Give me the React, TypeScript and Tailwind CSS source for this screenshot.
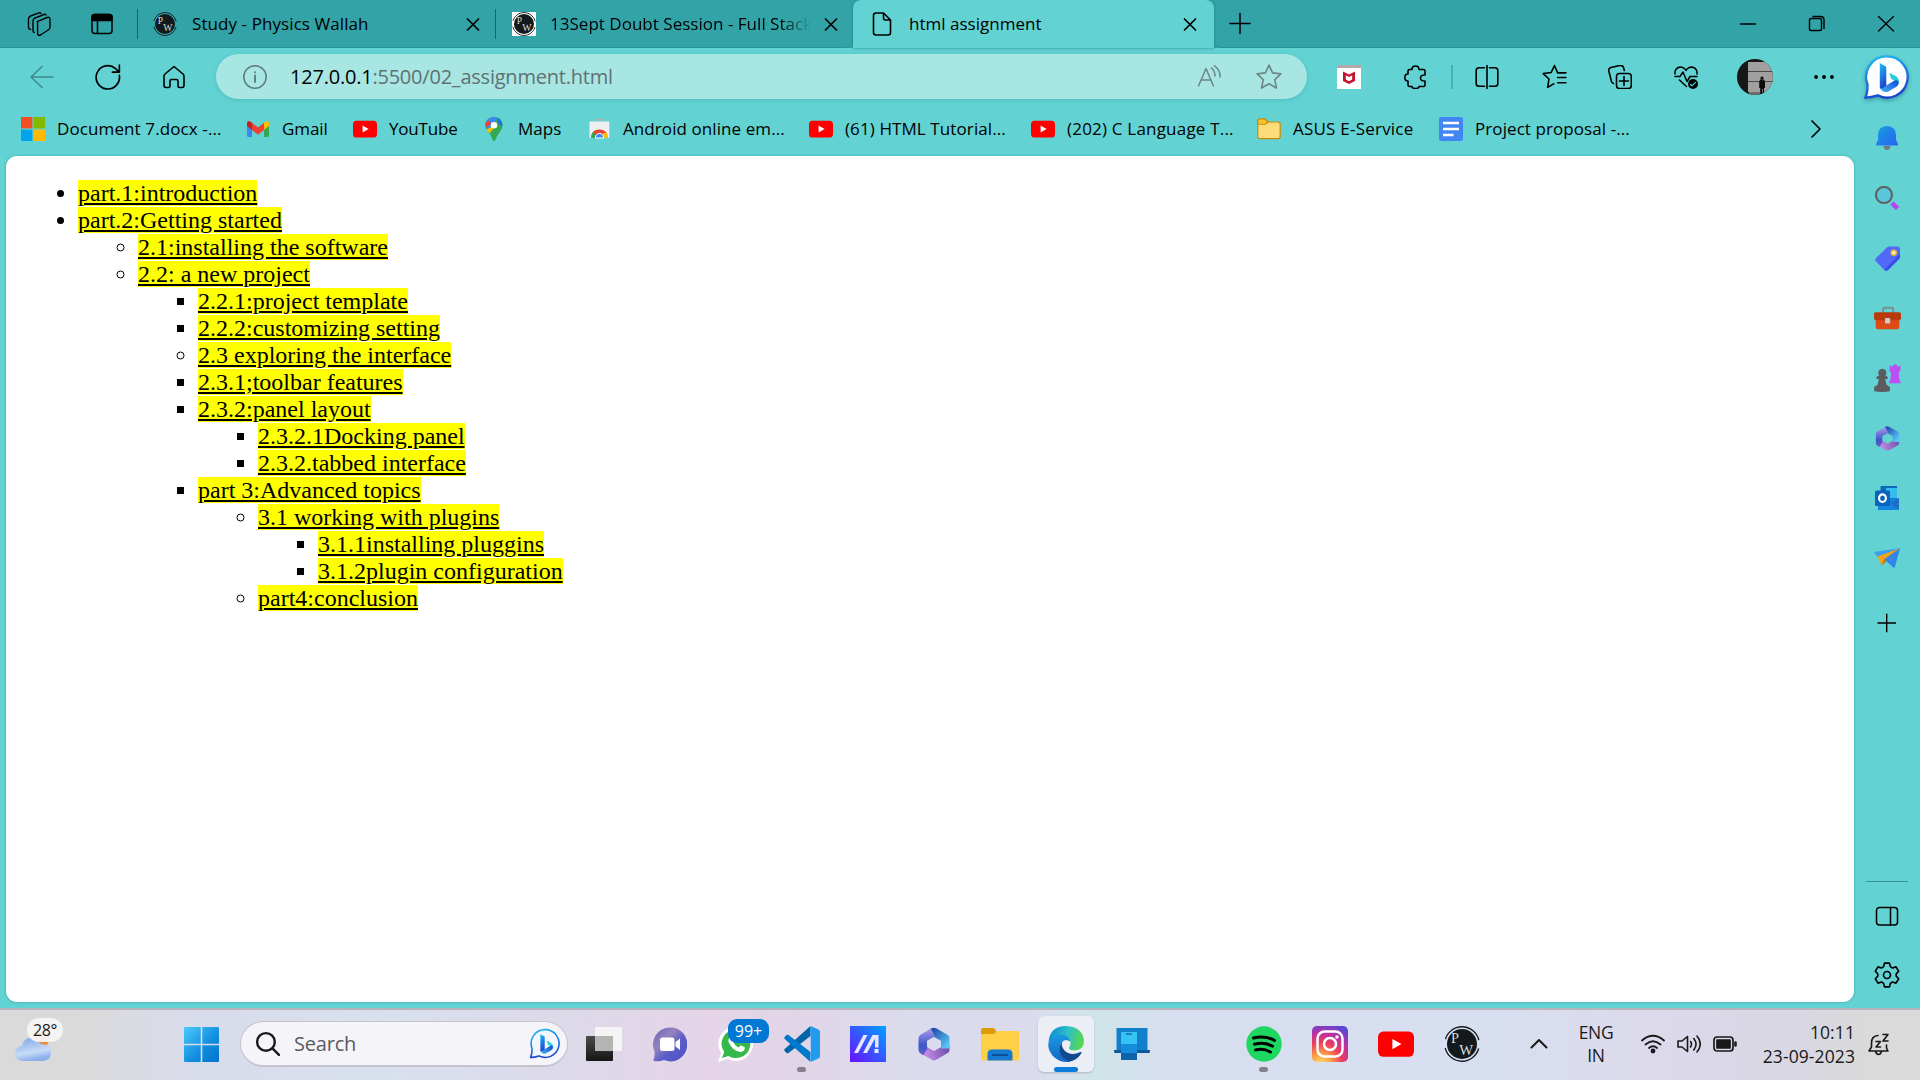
import type { ReactNode, SVGProps } from "react";

type IconProps = SVGProps<SVGSVGElement> & { size?: number };

/* Outline icon base on a 24-unit grid */
function Line({ size = 24, children, ...rest }: IconProps) {
  return (
    <svg width={size} height={size} viewBox="0 0 24 24" fill="none" stroke="currentColor" strokeWidth={1.5} strokeLinecap="round" strokeLinejoin="round" className="shrink-0" {...rest}>
      {children}
    </svg>
  );
}

/* Filled artwork base */
function Art({ size = 24, children, ...rest }: IconProps) {
  return (
    <svg width={size} height={size} viewBox="0 0 24 24" className="shrink-0" {...rest}>
      {children}
    </svg>
  );
}

function PwLogo({ size = 24 }: { size?: number }) {
  return (
    <Art size={size} fontFamily="Liberation Serif, serif" fill="#d8dcdc">
      <circle cx="12" cy="12" r="11.5" fill="none" stroke="#14191b" strokeWidth="0.9" strokeDasharray="30 6.1" strokeDashoffset="33" />
      <circle cx="12" cy="12" r="10" fill="#14191b" />
      <text x="4.7" y="11.600" fontSize="9.500">P</text>
      <text x="10.200" y="19" fontSize="9.800">W</text>
    </Art>
  );
}

function YouTube({ size = 24 }: { size?: number }) {
  return (
    <Art size={size}>
      <rect x="0" y="3.7" width="24" height="16.8" rx="3.6" fill="#ff0000" />
      <path d="M9.6 8.6 15.6 12l-6 3.5z" fill="#fff" />
    </Art>
  );
}

function BingBubble({ size, fill }: { size: number; fill: string }) {
  return (
    <svg width={size} height={size} viewBox="0 0 48 48" className="shrink-0">
      <defs>
        <linearGradient id="bb" x1="0" y1="0" x2="0.3" y2="1">
          <stop offset="0" stopColor="#1fc0f5" />
          <stop offset="1" stopColor="#1a45cf" />
        </linearGradient>
        <linearGradient id="bc" x1="0" y1="1" x2="1" y2="0">
          <stop offset="0" stopColor="#3fb8f2" />
          <stop offset="1" stopColor="#1445d6" />
        </linearGradient>
      </defs>
      <path d="M25 2.5a21.5 21.5 0 1 1-9.6 40.7C11.500 44.500 7 45.500 2.500 45.500 4.500 41 4.800 37 4.800 32A21.500 21.500 0 0 1 25 2.500Z" fill={fill} stroke="url(#bb)" strokeWidth="2.4" />
      <path d="m17.500 9.500 5.500 3c1 .6 1.300 1.200 1.300 2.500V34l-3.500 2.500c-1.800 1-3.300 0-3.300-2.500z" fill="url(#bb)" />
      <path d="m27.500 19.500 6 3.200c3.600 2.200 5 5.300 3.500 8.800L32 27.500l-2.500-1.500z" fill="#22cfe0" />
      <path d="m22.500 34 10-6c2.600-1.300 4.800-.3 4.600 2.500-.1 1.500-1 2.800-2.600 3.900L27 38.800c-4 2.300-8.500-.1-9.300-4.100 1 2 3 1.800 4.800-.7Z" fill="url(#bc)" />
    </svg>
  );
}

function Microsoft365({ size }: { size: number }) {
  return (
    <svg width={size} height={size} viewBox="0 0 32 32" fill="none" strokeWidth="7.600" strokeLinejoin="round" className="shrink-0">
      <defs>
        <linearGradient id="m1" gradientUnits="userSpaceOnUse" x1="8" y1="3" x2="8" y2="27">
          <stop offset="0" stopColor="#a596ea" />
          <stop offset="0.6" stopColor="#3c57c6" />
          <stop offset="1" stopColor="#6e60c8" />
        </linearGradient>
        <linearGradient id="m2" gradientUnits="userSpaceOnUse" x1="14" y1="5" x2="28" y2="18">
          <stop offset="0" stopColor="#2450b0" />
          <stop offset="1" stopColor="#58c8f6" />
        </linearGradient>
        <linearGradient id="m3" gradientUnits="userSpaceOnUse" x1="8" y1="26" x2="28" y2="20">
          <stop offset="0" stopColor="#c48ce8" />
          <stop offset="1" stopColor="#7353ac" />
        </linearGradient>
      </defs>
      <path d="M26 17.500V21L16 26.700 7 21.500" stroke="url(#m3)" />
      <path d="M16 1.500V5.300L26 11v9" stroke="none" />
      <path d="M13.500 6.500 16 5.300 26 11v9" stroke="url(#m2)" />
      <path d="M15 5.800 6 11v10.200l2.500 1.500" stroke="url(#m1)" />
    </svg>
  );
}

const s = "font-['Open_Sans','Noto_Sans',sans-serif]";

/* ---------- Tab strip ---------- */

const Close = () => (
  <Line size={24} strokeWidth={1.7}>
    <path d="m6.500 7 11 11M17.500 7l-11 11" />
  </Line>
);

function TabStrip() {
  return (
    <header className="flex h-12 shrink-0 bg-[#32a3a7] text-black">
      <div className="flex w-[138px] items-center border-b border-[#2b9296] pl-[27px]">
        <Line strokeWidth={1.4}>
          <path d="M10.200 9.600 20.200 5.500Q23 4.600 23 7.500V15q0 2-1.800 3l-7.700 5Q10.600 24.300 10.600 21V10.500q0-.7-.4-.9Z" />
          <path d="M7.200 20.500Q6 20 6 18.500V9q0-1.800 1.800-2.800L17 2.500q1.500-.5 2 .5M3.500 17.500Q1.500 17.200 1.500 15.500V7q0-2 2-3L12 .9q1.500-.5 2 .6" />
        </Line>
        <Line className="ml-[39px] shrink-0">
          <rect x="2" y="2.500" width="20" height="19" rx="3" />
          <path d="M2 8.500V5q0-2.500 3-2.500h14q3 0 3 2.500v3.500z" fill="black" />
          <path d="M7.500 9v12" />
        </Line>
        <i className="ml-[23px] h-[30px] w-px bg-[#17676a]" />
      </div>
      <div className="flex w-[359px] items-center border-b border-[#2b9296] pl-[15px]">
        <PwLogo />
        <span className="ml-[15px] w-[269px] text-[17px] tracking-[0.08px] whitespace-nowrap">Study - Physics Wallah</span>
        <Close />
        <i className="ml-[10px] h-[30px] w-px bg-[#17676a]" />
      </div>
      <div className="flex w-[356px] items-center rounded-br-[8px] border-b border-[#2b9296] pl-[15px]">
        <span className="bg-white">
          <PwLogo />
        </span>
        <span className="ml-[14px] w-[261px] overflow-hidden [mask-image:linear-gradient(to_right,black_88%,transparent)] text-[17px] tracking-[0.020px] whitespace-nowrap">13Sept Doubt Session - Full Stack</span>
        <span className="ml-[8px]">
          <Close />
        </span>
      </div>
      <div className="flex w-[361px] items-center rounded-t-[8px] bg-[#62d2d2] pl-[17px] shadow-[0_0_3px_#1d8589]">
        <Line strokeWidth={1.6}>
          <path d="M5.500 1h8l7 7v12.500q0 2.500-2.500 2.500H6q-2.500 0-2.500-2.500V3.500Q3.500 1 6 1M13.500 1v5q0 2 2 2h5" />
        </Line>
        <span className="ml-[15px] w-[269px] text-[17px] whitespace-nowrap tracking-[0.020px]">html assignment</span>
        <Close />
      </div>
      <div className="flex flex-1 items-center rounded-bl-[8px] border-b border-[#2b9296] pl-[14px]">
        <Line strokeWidth={1.5}>
          <path d="M2 11.500h20M12 1.500v20" />
        </Line>
        <div className="ml-auto flex items-center gap-[45px] pr-[22px]">
          <Line strokeWidth={1.3}>
            <path d="M4.500 12h15" />
          </Line>
          <Line strokeWidth={1.4}>
            <rect x="4.500" y="6.500" width="12" height="12" rx="1.800" />
            <path d="M8 4.500h7.500Q19 4.500 19 8v8.500" />
          </Line>
          <Line strokeWidth={1.3}>
            <path d="m4.500 4.500 15 14.500m0-14.500L4.500 19" />
          </Line>
        </div>
      </div>
    </header>
  );
}

/* ---------- Address row ---------- */

const Slot = ({ w, children }: { w: string; children: ReactNode }) => <span className={`flex shrink-0 items-center justify-center ${w}`}>{children}</span>;

function Toolbar() {
  return (
    <div className="flex h-[57px] shrink-0 items-center pl-[9px]">
      <Slot w="w-[66px]">
        <Line className="text-[#3d8b8c]">
          <path d="M23 12H1M12 1.500 1 12l11 10.500" />
        </Line>
      </Slot>
      <Slot w="w-[66px]">
        <Line size={26}>
          <path d="M22.500 10.500a10.800 10.800 0 1 1-3.500-6.300l2.500 2.600M22.500 1v6.500H16" />
        </Line>
      </Slot>
      <Slot w="w-[66px]">
        <Line strokeWidth={1.6}>
          <path d="m12 1.500 9 7.500q1 .8 1 2.500v9q0 2-2 2h-2.500q-1.500 0-1.500-1.500v-5q0-1.500-1.500-1.500h-5Q8 14.500 8 16v5q0 1.500-1.500 1.500H4q-2 0-2-2v-9Q2 9.800 3 9z" />
        </Line>
      </Slot>
      <div className="ml-[9px] flex h-[45px] w-[1091px] items-center rounded-full bg-[#a8e6e4] pr-[25px] pl-[27px] shadow-[0_1px_4px_#4fbcbd]">
        <Line className="shrink-0 text-[#5f7c7c]">
          <circle cx="12" cy="12" r="11.200" />
          <path d="M12 10.500V17M12 7.200v.2" strokeWidth="1.900" />
        </Line>
        <span className="ml-[23px] flex-1 text-[20px] tracking-[-0.22px] whitespace-nowrap text-[#5f7171]">
          <span className="text-black">127.0.0.1</span>:5500/02_assignment.html
        </span>
        <Line className="mr-[35px] shrink-0 text-[#6d8585]">
          <path d="M1.500 21 9 3.500 16.500 21M4 15h10M14.500 3q3.500 3 3.500 8M17.500.8Q23.500 5 23 12" />
        </Line>
        <Line size={26} className="shrink-0 text-[#6d8585]">
          <path d="m12 1 3.300 7.200 7.700.9-5.700 5.300 1.600 7.800-6.900-3.900-6.900 3.900 1.600-7.800L1 9.100l7.700-.9z" />
        </Line>
      </div>
      <div className="ml-[9px] flex items-center">
        <Slot w="w-[66px]">
          <Art>
            <path d="M0 0h24v24H0z" fill="#fff" />
            <path d="M0 0h24v3H0z" fill="#b4a8aa" />
            <path d="m6 6.500 6 3 6-3v9.500l-6 3-6-3zm2.800 3.700v4.300L12 16.200l3.200-1.700v-4.300L12 12z" fill="#c8102e" />
          </Art>
        </Slot>
        <Slot w="w-[67px]">
          <Line strokeWidth={1.6}>
            <path d="M8 4.500q0-3.500 3.500-3.500T15 4.500h4.500q1.500 0 1.500 1.500v4q-4.500-.2-4.500 3t4.500 3v4q0 1.500-1.500 1.500H15q0 2-3.500 2T8 21.500H5.500Q4 21.500 4 20v-4Q.8 16 .8 12.500T4 9V6q0-1.500 1.500-1.500z" />
          </Line>
        </Slot>
        <i className="ml-[2px] h-6 w-[2px] bg-[#4bb2b3]" />
        <Slot w="w-[68px]">
          <Line strokeWidth={1.6}>
            <path d="M9.500 2.800H4Q1.200 2.800 1.200 5.500v13q0 2.700 2.800 2.700h5.500M14.500 2.800H20q2.800 0 2.800 2.700v13q0 2.700-2.800 2.700h-5.500M12 .5v23" />
          </Line>
        </Slot>
        <Slot w="w-[66px]">
          <Line size={25}>
            <path d="M15 8.500 12 1.500 8.700 8.200 1.200 9.200l5.500 5.200-1.300 8 6-3.400M15 8.500h8M15 13h8M15 18h8" />
          </Line>
        </Slot>
        <Slot w="w-[66px]">
          <Line strokeWidth={1.6}>
            <rect x="8.500" y="8.500" width="14.800" height="15" rx="3" />
            <path d="M16 11.500v9M11.500 16h9M5.500 18.500q-1.500-.5-2-2L.8 6Q.3 3.500 2.800 2.500l9-2Q14.500 0 15.500 2.500l.8 3" />
          </Line>
        </Slot>
        <Slot w="w-[66px]">
          <Line>
            <path d="M1 9Q.5 3 6 2q4 0 6 3.500Q14 2 18 2q5.500 1 5 7M1 11.500h5l3-4.500 4 9.500 3-5h7M5.500 15l7 6.500" />
            <circle cx="19" cy="19" r="5" fill="black" stroke="none" />
            <path d="m16.500 19.500 1.500 1.300 3.500-3.500" stroke="#62d2d2" strokeWidth="1.200" />
          </Line>
        </Slot>
        <Slot w="w-[71px]">
          <svg width="36" height="36" viewBox="0 0 36 36">
            <clipPath id="face">
              <circle cx="18" cy="18" r="18" />
            </clipPath>
            <g clipPath="url(#face)">
              <path d="M0 0h36v36H0z" fill="#171717" />
              <path d="M11 3h25v30H11z" fill="#a0a0a0" />
              <path d="M12 33h24v3H12z" fill="#6e6e6e" />
              <path d="M11 12.500h25M11 22.500h25" stroke="#4a4a4a" />
              <circle cx="25" cy="19" r="1.600" fill="#0c0c0c" />
              <path d="M23 20.500h4l1 2.500v6h-1v6h-1.300v-5h-.7v5h-1.800v-6h-1v-6z" fill="#0c0c0c" />
            </g>
          </svg>
        </Slot>
        <Slot w="w-[67px]">
          <Art>
            <circle cx="4" cy="12" r="1.900" />
            <circle cx="12" cy="12" r="1.900" />
            <circle cx="20" cy="12" r="1.900" />
          </Art>
        </Slot>
      </div>
      <span className="ml-[6px] drop-shadow-[0_2px_2px_rgba(0,60,90,0.35)]">
        <BingBubble size={46} fill="#fff" />
      </span>
    </div>
  );
}

/* ---------- Bookmarks ---------- */

const bookmarks = [
  {
    w: "w-[225px]",
    t: "tracking-[0.11px]",
    label: "Document 7.docx -...",
    icon: (
      <Art>
        <path d="M0 0h11.400v11.400H0z" fill="#f25022" />
        <path d="M12.600 0H24v11.400H12.600z" fill="#7fba00" />
        <path d="M0 12.600h11.400V24H0z" fill="#00a4ef" />
        <path d="M12.600 12.600H24V24H12.600z" fill="#ffb900" />
      </Art>
    ),
  },
  {
    w: "w-[107px]",
    t: "tracking-[-0.100px]",
    label: "Gmail",
    icon: (
      <Art>
        <path d="M1 7v11.500q0 1.500 1.500 1.500H6V10z" fill="#4285f4" />
        <path d="M23 7v11.500q0 1.500-1.500 1.500H18V10z" fill="#34a853" />
        <path d="M1 9V6q0-2 1.800-2Q4 4 6 5.700V13z" fill="#c5221f" />
        <path d="M23 9V6q0-2-1.800-2Q20 4 18 5.700V13z" fill="#fbbc04" />
        <path d="m6 5.700 6 4.800 6-4.800V13l-6 4.700L6 13z" fill="#ea4335" />
      </Art>
    ),
  },
  { w: "w-[129px]", t: "tracking-[-0.2px]", label: "YouTube", icon: <YouTube /> },
  {
    w: "w-[105px]",
    t: "tracking-[0px]",
    label: "Maps",
    icon: (
      <Art>
        <path d="M12 0q8 0 8.500 8 0 3.500-3 7.500-3.500 4-4 7.500-1.500 2-3 0-.5-3-3-6.500Q3.500 12 3.500 8 4 0 12 0Z" fill="#34a853" />
        <path d="M5.500 3.300Q8 0 12 0q2 0 3.800 1L6.500 12.500Q3.500 9.500 3.500 8q0-3 2-4.700Z" fill="#4285f4" />
        <path d="M3.600 6.500 5.500 3.300l4 3.300-6 3.900z" fill="#ea4335" />
        <path d="m8.500 10.500 6.500-5 3.500-3-11 14-3-4z" fill="#fbbc04" />
        <path d="M15.800 1q5 2.500 4.500 8.500l-5-3.500z" fill="#1a73e8" />
        <circle cx="12" cy="8.300" r="3.200" fill="#fff" />
      </Art>
    ),
  },
  {
    w: "w-[222px]",
    t: "tracking-[0.080px]",
    label: "Android online em...",
    icon: (
      <Art>
        <path d="M8.500 4.500V2.500h7v2" fill="none" stroke="#aab3b5" strokeWidth="1.500" />
        <path d="M2.500 4.500h19.800V21H2.500z" fill="#edf0f1" />
        <path d="M4 21q0-8.500 8.400-8.500T20.800 21z" fill="#ea4335" />
        <path d="M4 21q0-4 2.500-6.500l4 6.500z" fill="#34a853" />
        <path d="M16 16h4q1 2 .8 5H15z" fill="#fbbc04" />
        <path d="M8.500 21q0-4.500 4-4.500t4 4.500z" fill="#4285f4" stroke="#fff" />
      </Art>
    ),
  },
  { w: "w-[222px]", t: "tracking-[0.100px]", label: "(61) HTML Tutorial...", icon: <YouTube /> },
  { w: "w-[226px]", t: "tracking-[0.200px]", label: "(202) C Language T...", icon: <YouTube /> },
  {
    w: "w-[182px]",
    t: "tracking-[0.220px]",
    label: "ASUS E-Service",
    icon: (
      <Art stroke="#c28d0c" strokeWidth="1.200">
        <path d="M.8 5V4Q.8 2 3 2h5l3 3h10q2.200 0 2.200 2.200V19.500q0 2.200-2.200 2.200H3q-2.200 0-2.200-2.200z" fill="#ffdc7a" />
        <path d="M.8 7V4Q.8 2 3 2h5l3 3-3 2.500z" fill="#fdc22f" />
      </Art>
    ),
  },
  {
    w: "w-[365px]",
    t: "tracking-[0.080px]",
    label: "Project proposal -...",
    icon: (
      <Art>
        <rect width="24" height="24" rx="2" fill="#4285f4" />
        <path d="M4 6h16M4 12h16M4 18h10.500" stroke="#fff" strokeWidth="2.500" />
      </Art>
    ),
  },
];

function Bookmarks() {
  return (
    <div className="flex h-[51px] shrink-0 items-center pb-[3px] pl-[21px] text-[17px]">
      {bookmarks.map((b) => (
        <div key={b.label} className={`flex shrink-0 items-center gap-3 whitespace-nowrap ${b.w} ${b.t}`}>
          {b.icon}
          {b.label}
        </div>
      ))}
      <Line strokeWidth={1.700}>
        <path d="m8 4 8 8-8 8" />
      </Line>
    </div>
  );
}

/* ---------- Page content ---------- */

const Item = ({ text, kind }: { text: string; kind: string }) => (
  <li className={kind}>
    <span className="bg-[#ffff00] underline">{text}</span>
  </li>
);
const DISC = "list-disc";
const RING = "list-[circle]";
const BOX = "list-[square]";

function Page() {
  return (
    <main className="w-[1848px] rounded-[11px] bg-white pt-6 pl-3 font-['Liberation_Serif',serif] text-[24px] leading-[27px] text-black shadow-[0_0_3px_#3fa4a6] [&_ul]:pl-[60px]">
      <ul>
        <Item kind={DISC} text="part.1:introduction" />
        <Item kind={DISC} text="part.2:Getting started" />
        <ul>
          <Item kind={RING} text="2.1:installing the software" />
          <Item kind={RING} text="2.2: a new project" />
          <ul>
            <Item kind={BOX} text="2.2.1:project template" />
            <Item kind={BOX} text="2.2.2:customizing setting" />
            <Item kind={RING} text="2.3 exploring the interface" />
            <Item kind={BOX} text="2.3.1;toolbar features" />
            <Item kind={BOX} text="2.3.2:panel layout" />
            <ul>
              <Item kind={BOX} text="2.3.2.1Docking panel" />
              <Item kind={BOX} text="2.3.2.tabbed interface" />
            </ul>
            <Item kind={BOX} text="part 3:Advanced topics" />
            <ul>
              <Item kind={RING} text="3.1 working with plugins" />
              <ul>
                <Item kind={BOX} text="3.1.1installing pluggins" />
                <Item kind={BOX} text="3.1.2plugin configuration" />
              </ul>
              <Item kind={RING} text="part4:conclusion" />
            </ul>
          </ul>
        </ul>
      </ul>
    </main>
  );
}

/* ---------- Sidebar ---------- */

const sideIcons = [
  <Art key="bell">
    <defs>
      <linearGradient id="bl" x1="0" y1="0" x2="1" y2="1">
        <stop stopColor="#12a0dc" />
        <stop offset="1" stopColor="#2c62f4" />
      </linearGradient>
    </defs>
    <path d="M8.500 20h7q-.5 4-3.500 4t-3.500-4Z" fill="#75797c" />
    <path d="M12 0q9 .5 9 9v5l2 4q.5 1.500-1 1.500H2Q.5 19.500 1 18l2-4V9Q3 .5 12 0Z" fill="url(#bl)" />
  </Art>,
  <Art key="search">
    <path d="m17 17 5.500 5.500" stroke="#c43df2" strokeWidth="4.500" />
    <circle cx="9" cy="9" r="8" fill="#59c8dc" stroke="#5f6467" strokeWidth="2.200" />
  </Art>,
  <Art key="tag" size={25}>
    <path d="M14 .5h7.500Q24 .5 24 3v7q0 1.500-1 2.500L12.500 23q-1.800 1.500-3.500 0l-8-8q-1.500-1.500 0-3.500L11.500 1.500q1-1 2.500-1Z" fill="#5069f7" />
    <path d="M24 7v3q0 1.500-1 2.500L12.500 23q-1.800 1.500-3.500 0z" fill="#3d4be8" />
    <circle cx="18" cy="6.500" r="2.300" fill="#fff" stroke="#f3bd21" strokeWidth="1.600" />
  </Art>,
  <Art key="toolbox" size={27}>
    <path d="M8 6.500V4q0-1.500 1.500-1.500h6Q17 2.500 17 4v2.500" fill="none" stroke="#7c8c90" strokeWidth="1.700" />
    <path d="M1.500 9h21v10.500q0 2-2 2h-17q-2 0-2-2z" fill="#dd4c16" />
    <path d="M1.500 6.500h21Q24 6.500 24 8v4q0 1.500-2 1.500H2Q0 13.500 0 12V8q0-1.500 1.500-1.500Z" fill="#b83a0d" />
    <rect x="9.800" y="11.500" width="4.600" height="5" rx="1" fill="#c9cdd0" />
  </Art>,
  <Art key="chess" size={28}>
    <path d="m14.500 1 2 1.300L18 .5h2l1.500 1.800L23.500 1v4.500l-1.500 2 .5 5.500 1.500 3.500H13.500L15 13l.5-5.500-1.500-2z" fill="#bd4df5" />
    <path d="M8 4q3.500.3 3.500 3.800 0 1.200-1 2.500l2 .5v2H10.500l1 5 3 2v3.500q-6.500 1.200-13.500 0v-3.500l3-2 1-5H3v-2l2.300-.5q-.8-1.300-.8-2.500Q4.500 4.300 8 4Z" fill="#5c5b5d" />
  </Art>,
  <Microsoft365 key="m365" size={27} />,
  <Art key="outlook">
    <path d="M5.500 0H22v13H5.500z" fill="#1066b8" />
    <path d="M11 2h11v10H11z" fill="#35bdf0" />
    <path d="M3 12.500h21V22q0 2-2 2H3z" fill="#1484df" />
    <path d="m24 12-9 5 9 7z" fill="#1d6fc4" />
    <rect y="4.500" width="15" height="15.500" rx="1.500" fill="#0a64bd" />
    <ellipse cx="7.500" cy="12.200" rx="3.400" ry="3.800" fill="none" stroke="#fff" strokeWidth="2.200" />
  </Art>,
  <Art key="plane" size={26}>
    <path d="M0 6.500 24 3 6 15z" fill="#3c9cf0" />
    <path d="M24 3 19 21l-7.500-6z" fill="#2979ea" />
    <path d="M24 3 3 10.500l4 8.500 4-5.500z" fill="#eda31c" />
    <path d="M24 3 9 13.500 7 19l4-3.500z" fill="#bd7913" />
    <path d="M24 3 10 13l8 8z" fill="#3386ee" />
  </Art>,
];

function Sidebar() {
  return (
    <aside className="flex w-[66px] flex-col items-center text-black">
      <div className="-mt-[48px] flex flex-col">
        {sideIcons.map((icon, i) => (
          <span key={i} className="flex h-[60px] w-[66px] items-center justify-center">
            {icon}
          </span>
        ))}
        <span className="flex h-[70px] items-center justify-center">
          <Line strokeWidth={1.400}>
            <path d="M2.500 12h18.500M11.700 2.700v18.600" strokeLinecap="butt" />
          </Line>
        </span>
      </div>
      <i className="mt-auto h-px w-[42px] bg-[#3d9092]" />
      <span className="flex h-[67px] items-center">
        <Line>
          <rect x="1.500" y="3.500" width="21" height="17.500" rx="3" />
          <path d="M15.500 3.500V21" />
        </Line>
      </span>
      <span className="mb-[2px] flex h-[51px] items-center">
        <Line size={26}>
          <circle cx="12" cy="12" r="3.200" />
          <path d="M9.700 1h4.600l.8 3.300 2 1.200 3.200-1 2.500 4L20.500 11v2l2.300 2.500-2.500 4-3.200-1-2 1.200-.8 3.300H9.700l-.8-3.300-2-1.200-3.200 1-2.500-4L3.500 13v-2L1.200 8.500l2.500-4 3.200 1 2-1.200z" />
        </Line>
      </span>
    </aside>
  );
}

/* ---------- Taskbar ---------- */

function TaskSlot({ children, dot, active }: { children?: ReactNode; dot?: boolean; active?: boolean }) {
  return (
    <span className="flex w-[66px] shrink-0 justify-center">
      <span className={`relative flex h-14 w-14 items-center justify-center rounded-[6px] ${active ? "bg-[#eceef5] shadow-[0_1px_2px_#b4b4c4]" : ""}`}>
        {children}
        {dot && <i className="absolute bottom-0 left-[23px] h-[5px] w-[9px] rounded-full bg-[#85808b]" />}
        {active && <i className="absolute bottom-0 left-4 h-[5px] w-6 rounded-full bg-[#0a7bd8]" />}
      </span>
    </span>
  );
}

function Taskbar() {
  return (
    <footer className="flex h-[72px] shrink-0 items-center border-t-2 border-[#b5b3bd] bg-[linear-gradient(90deg,#dadada_0%,#dadada_4%,#d9dcea_10%,#d8e0ee_20%,#ddd9e9_30%,#e5d4e7_37%,#e1d5e7_41%,#dadced_48%,#dadced_54%,#cfe5e8_57%,#d7def0_61%,#d8dff0_78%,#dcd8e9_88%,#d8d7e2_94%,#dadada_97%)] pb-[2px] text-[#191919]">
      <div className="relative ml-[14px] h-14 w-[170px]">
        <svg width="40" height="50" viewBox="0 0 40 50">
          <defs>
            <linearGradient id="cl" x1="0" y1="0" x2="0.300" y2="1">
              <stop stopColor="#7ba4e6" />
              <stop offset="0.700" stopColor="#c7dcf6" />
              <stop offset="1" stopColor="#8db0ec" />
            </linearGradient>
          </defs>
          <circle cx="27" cy="22" r="9" fill="#ed8a3c" />
          <path d="M9 45q-8-.5-8-8 .5-6 7-7 1.500-8 9-8 7 0 9.500 6 10-.5 10.500 8.500 0 8-8 8.500z" fill="url(#cl)" />
        </svg>
        <span className="absolute top-[2px] left-[13px] flex h-6 w-9 items-center justify-center rounded-full bg-[#f5f5f5]/95 text-[16px] tracking-[-0.300px]">28°</span>
      </div>
      <svg width="35" height="35" viewBox="0 0 35 35" className="shrink-0">
        <defs>
          <linearGradient id="wn" x1="0" y1="0" x2="1" y2="1">
            <stop stopColor="#4cc9fb" />
            <stop offset="0.600" stopColor="#0f8ddf" />
            <stop offset="1" stopColor="#0073cc" />
          </linearGradient>
        </defs>
        <path d="M1 0h15.700v16.700H0V1q0-1 1-1ZM18.300 0H34q1 0 1 1v15.700H18.300zM0 18.300h16.700V35H1q-1 0-1-1zM18.300 18.300H35V34q0 1-1 1H18.300z" fill="url(#wn)" />
      </svg>
      <div className="ml-[21px] flex h-[46px] w-[328px] shrink-0 items-center rounded-full border border-b-2 border-[#c5c4d0] bg-[#f5f4f9] pl-[14px]">
        <Line size={25} strokeWidth={2.300}>
          <circle cx="10.500" cy="10.500" r="8.500" />
          <path d="m17 17 6 6" />
        </Line>
        <span className="ml-[14px] w-[235px] text-[20px] tracking-[-0.200px] text-[#5a5a60]">Search</span>
        <BingBubble size={31} fill="#f1f5fc" />
      </div>
      <div className="ml-[3px] flex">
        <TaskSlot>
          <svg width="36" height="36" viewBox="0 0 36 36">
            <defs>
              <linearGradient id="tv" x1="0" y1="0" x2="0" y2="1">
                <stop stopColor="#4b4b4b" />
                <stop offset="1" stopColor="#151515" />
              </linearGradient>
            </defs>
            <rect y="10" width="27" height="25" rx="1" fill="url(#tv)" />
            <rect x="9" y="1" width="27" height="24" rx="1" fill="#f4f4f4" />
            <path d="M9 10h18v15H9z" fill="#b4b4b4" />
          </svg>
        </TaskSlot>
        <TaskSlot>
          <svg width="34" height="35" viewBox="0 0 34 35">
            <defs>
              <linearGradient id="ch" x1="0" y1="0" x2="1" y2="1">
                <stop stopColor="#6a63b8" />
                <stop offset="0.350" stopColor="#9483bd" />
                <stop offset="0.600" stopColor="#5a5cc8" />
                <stop offset="1" stopColor="#5152c4" />
              </linearGradient>
            </defs>
            <path d="M17 .5a16.500 17 0 1 1-6 32.500Q6 35 1 34q-1-.5-.5-1.500Q2 29 1.500 24.500A17 17 0 0 1 17 .5Z" fill="url(#ch)" />
            <rect x="7" y="10.500" width="14.500" height="13.500" rx="2.500" fill="#fff" />
            <path d="m22.500 15 4.500-3.500V23l-4.500-3.500z" fill="#fff" />
          </svg>
        </TaskSlot>
        <TaskSlot>
          <svg width="36" height="36" viewBox="0 0 36 36">
            <path d="M18 .5A17.300 17.300 0 1 1 9.500 33L0 36l3-9A17.300 17.300 0 0 1 18 .5Z" fill="#fff" />
            <path d="M18 3.500a14.300 14.300 0 1 1-7.500 26.500L4 32l2.200-6A14.300 14.300 0 0 1 18 3.500Z" fill="#36b94a" />
            <path d="M12.500 10.500q1-1 2.300 0l2 3.800-1.500 2.200q2 3.500 5.500 5l2-2.200 4 2q.5 4-4.500 4.700Q14.500 25 10.500 16q-.5-3.500 2-5.500Z" fill="#fff" />
          </svg>
          <span className="absolute top-[3px] left-[20px] flex h-6 w-[41px] items-center justify-center rounded-[9px] bg-[#0078d4] text-[16px] text-white">99+</span>
        </TaskSlot>
        <TaskSlot dot>
          <svg width="36" height="36" viewBox="0 0 36 36">
            <path d="M26.500 0v10L4.500 27q-1 .7-2 0L.7 25q-1-1 0-2z" fill="#0065a9" />
            <path d="M26.500 36V26L4.500 9q-1-.7-2 0L.7 11q-1 1 0 2z" fill="#007acc" />
            <path d="m26.500 0 8 3.500Q36 4 36 6v24q0 2-1.500 2.500l-8 3.500q1.500-1 .5-2z" fill="#1f9cf0" />
          </svg>
        </TaskSlot>
        <TaskSlot>
          <svg width="36" height="36" viewBox="0 0 36 36">
            <defs>
              <linearGradient id="my" x1="0" y1="1" x2="1" y2="0">
                <stop stopColor="#6a10ff" />
                <stop offset="1" stopColor="#00a2ff" />
              </linearGradient>
            </defs>
            <path d="M0 0h36v36H0z" fill="url(#my)" />
            <path d="M4 27 13.500 9h4L8 27zM13 27l9.500-18h6v12.500H25V12.500L17 27zM24.500 23h4v4h-4z" fill="#e8e6ff" />
          </svg>
        </TaskSlot>
        <TaskSlot>
          <Microsoft365 size={36} />
        </TaskSlot>
        <TaskSlot>
          <svg width="38" height="36" viewBox="0 0 38 36">
            <path d="M0 4q0-2 2-2h10q2 0 3 3l1 2-3 3H0z" fill="#dd9b06" />
            <path d="M0 8h13l3-3h21q1 0 1 1v27q0 1.500-1.500 1.500h-35Q0 34.500 0 33z" fill="#ffcf48" />
            <path d="M6.500 34.500V28q0-4.500 4.500-4.500h16q4.500 0 4.500 4.500v6.500z" fill="#147bd1" />
            <path d="M12 29h14" stroke="#0b4f92" strokeWidth="2" strokeLinecap="round" />
          </svg>
        </TaskSlot>
        <TaskSlot active>
          <svg width="36" height="36" viewBox="0 0 36 36">
            <defs>
              <linearGradient id="e1" x1="0" y1="0.300" x2="1" y2="0.500">
                <stop stopColor="#0f87d6" />
                <stop offset="0.500" stopColor="#2bc0c9" />
                <stop offset="1" stopColor="#58d84c" />
              </linearGradient>
              <linearGradient id="e2" x1="0" y1="0" x2="0" y2="1">
                <stop stopColor="#1b9ae2" />
                <stop offset="1" stopColor="#1368c2" />
              </linearGradient>
            </defs>
            <path d="M.5 16Q2 0 18 0q17 1 18 15 0 9-9.500 9.500-6 0-5.500-3 2-2 1.500-5.500Q20 10 13 10 5 10 .5 16Z" fill="url(#e1)" />
            <path d="M.2 18Q2 8.500 13 8.500q8 .5 9 7-4-3-7.500 0-5.500 6-.5 14 3 4.500 9 6Q14 37.500 6.500 31.500.2 26 .2 18Z" fill="url(#e2)" />
            <path d="M14.500 15.500Q9 22 13 29q4.500 7 11 6 6-2 9.500-8 .5-1.500-1-1-10 4.500-16-1.500-4-4.500-2-9Z" fill="#114a8e" />
          </svg>
        </TaskSlot>
        <TaskSlot>
          <svg width="36" height="36" viewBox="0 0 36 36">
            <path d="M2.500 2h31v23h-31z" fill="#117fcb" />
            <path d="M0 24h36v1.500q0 1.500-1.500 1.500h-33Q0 27 0 25.500z" fill="#0a5a9c" />
            <path d="M7 6h16v28H7z" fill="#0d62ae" />
            <path d="M7 6h16v21H7z" fill="#168dda" />
            <path d="M7 6h16v12H7z" fill="#35c3f3" />
            <path d="M12 8h6" stroke="#0e6fb4" strokeWidth="1.500" />
          </svg>
        </TaskSlot>
        <TaskSlot />
        <TaskSlot dot>
          <svg width="36" height="36" viewBox="0 0 36 36">
            <circle cx="18" cy="18" r="17.700" fill="#1ed760" />
            <path d="M7.500 12q11.500-3 21 2.500M8.500 18.200q10-2.600 18 2M9.500 24q8-2 15 2" fill="none" stroke="#000" strokeWidth="3" strokeLinecap="round" />
          </svg>
        </TaskSlot>
        <TaskSlot>
          <svg width="36" height="36" viewBox="0 0 36 36">
            <defs>
              <radialGradient id="ig" cx="0.250" cy="1.050" r="1.150">
                <stop stopColor="#ffdc6b" />
                <stop offset="0.250" stopColor="#fca044" />
                <stop offset="0.500" stopColor="#ee3f5c" />
                <stop offset="0.750" stopColor="#b931a5" />
                <stop offset="1" stopColor="#5a47d5" />
              </radialGradient>
            </defs>
            <rect width="36" height="36" rx="5" fill="url(#ig)" />
            <g fill="none" stroke="#fff" strokeWidth="2.500">
              <rect x="5.500" y="5.500" width="25" height="25" rx="7" />
              <circle cx="18" cy="18" r="6" />
            </g>
            <circle cx="25" cy="11" r="1.700" fill="#fff" />
          </svg>
        </TaskSlot>
        <TaskSlot>
          <YouTube size={36} />
        </TaskSlot>
        <TaskSlot>
          <PwLogo size={36} />
        </TaskSlot>
      </div>
      <div className="ml-auto flex items-center">
        <Line strokeWidth={2}>
          <path d="m4.500 15.500 7.500-7.500 7.500 7.500" />
        </Line>
        <div className="w-[90px] text-center text-[17.500px] leading-[23px] tracking-[-0.300px]">
          ENG
          <br />
          IN
        </div>
        <Line strokeWidth={1.800}>
          <path d="M1 8.500q11-9.500 22 0M4.500 12.500q7.500-6.500 15 0M8 16q4-3.500 8 0" />
          <circle cx="12" cy="19" r="1.500" fill="currentColor" />
        </Line>
        <Line strokeWidth={1.600} className="ml-3 shrink-0">
          <path d="M1 9h4l5.500-4.500v15L5 15H1zM13.500 9.500q2 2.500 0 5.500M16.800 6.500q4.500 5.500 0 11.500M20 4q6.500 8 0 16" />
        </Line>
        <Line strokeWidth={1.700} className="ml-3 shrink-0">
          <rect x="1" y="5" width="19" height="14" rx="3" />
          <rect x="4" y="8" width="13" height="8" fill="currentColor" />
          <path d="M22.500 10.500v3" strokeWidth="2.500" />
        </Line>
        <div className="w-[118px] text-right text-[17.500px] leading-6 tracking-[0.100px]">
          10:11
          <br />
          23-09-2023
        </div>
        <Line strokeWidth={1.600} className="mr-[29px] ml-[12px] shrink-0">
          <path d="M11 3.500Q4.500 4 4.500 11v4l-2.500 4h19l-1.500-3v-3M8.500 19.500q1 3 3 3t3-3M9 9.500h4.500L9 15h4.500M16 2.500h5L16 9h5" />
        </Line>
      </div>
    </footer>
  );
}

export default function App() {
  return (
    <div className={`flex h-[1080px] w-[1920px] flex-col overflow-hidden bg-[#62d2d2] text-black ${s}`}>
      <TabStrip />
      <Toolbar />
      <Bookmarks />
      <div className="flex h-[846px] shrink-0 pl-[6px]">
        <Page />
        <Sidebar />
      </div>
      <div className="h-[6px] shrink-0" />
      <Taskbar />
    </div>
  );
}
